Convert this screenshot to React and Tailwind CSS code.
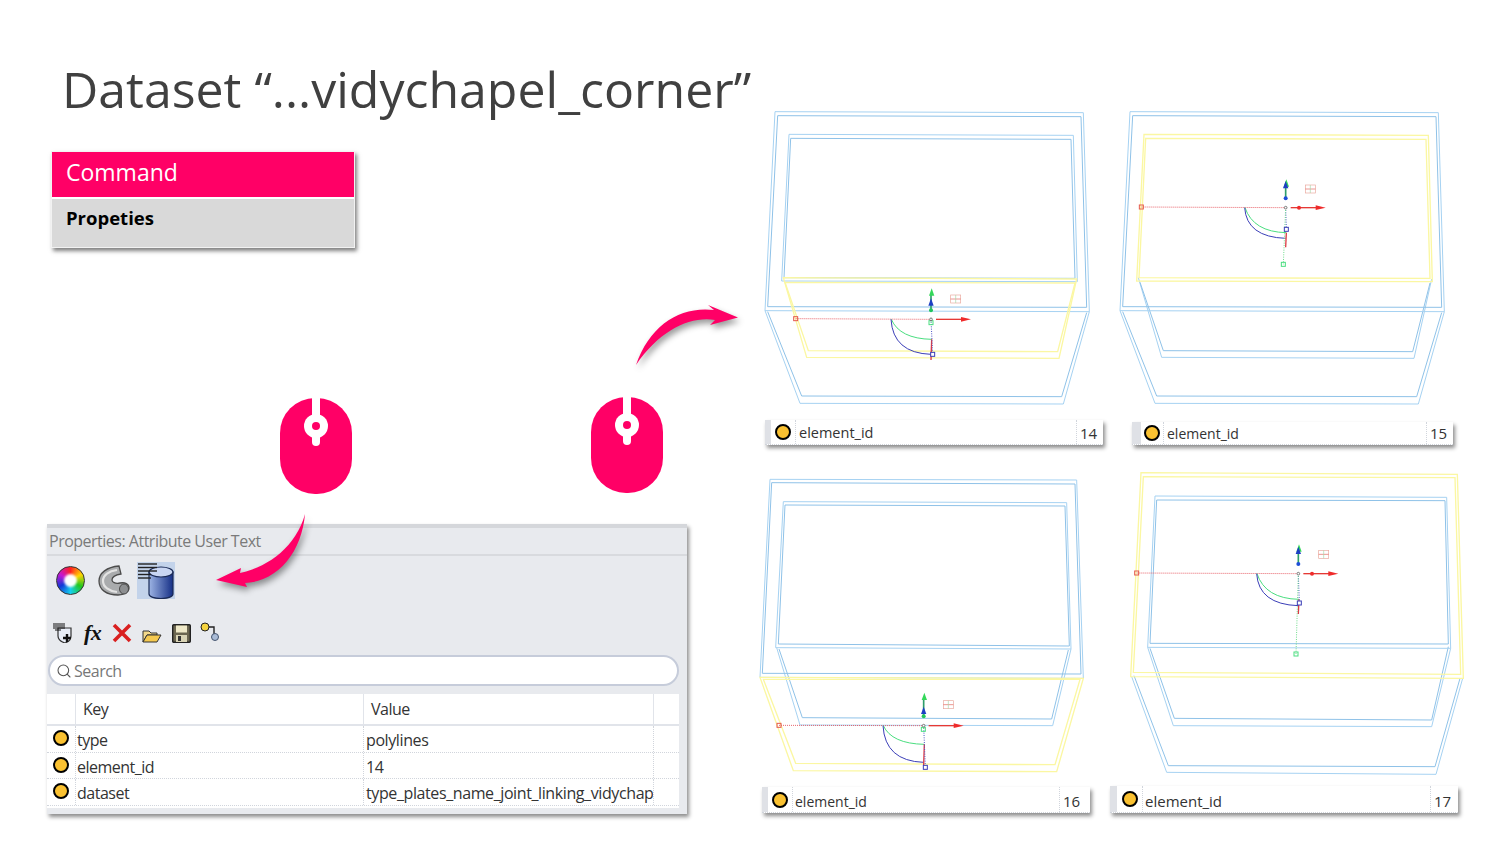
import { Search } from 'lucide-react'

const PINK = '#ff0066'
const BLUE = '#a6d2f2'
const YELLOW = '#fbf7a2'

const base = {
    A: [['60,35 985,38 1003,635 30,632'], ['68,47 978,50 995,622 38,620']],
    B: [['102,103 955,106 967,545 80,543'], ['107,115 948,118 960,535 87,533']],
    C: [['85,533 155,772 912,775 965,537'], ['90,547 160,752 908,755 960,549']],
    D: [['30,632 135,910 925,912 1003,635'], ['38,635 140,888 920,890 995,638']],
}

const cards = [
    {
        id: 14,
        yellow: 'C',
        quads: base,
        gizmo: { o: [528, 658], left: [122, 656], arc: 409, greenEnd: 718, blueEnd: 763, redEnd: 780, blueSq: [533, 763], greenSq: [528, 668], icon: [602, 597], blueTop: 595, greenTop: 565, dotY: 631, dotColor: '#22c55e', redDot: false },
        wrap: 'h-[320px]',
        svg: 'h-[320px]',
        viewBox: '0 0 1050 960',
        bar: 'ml-[10px] w-[338px] h-[25px]',
        strip: 'w-[6px]',
        circle: 'w-[25px]',
        key: 'w-[281px] pl-[3px] pt-[2px] text-[14.5px]',
        num: 'pl-[3px] pt-[2px]',
    },
    {
        id: 15,
        yellow: 'B',
        quads: base,
        gizmo: { o: [527, 323], left: [94, 321], arc: 405, greenEnd: 398, blueEnd: 415, redEnd: 442, blueSq: [529, 388], greenSq: [520, 493], icon: [601, 267], blueTop: 243, greenTop: 238, dotY: 295, dotColor: '#1d4ed8', redDot: 567 },
        wrap: 'h-[322px]',
        svg: 'h-[322px]',
        viewBox: '0 0 1050 966',
        bar: 'ml-[22px] w-[321px] h-[23px]',
        strip: 'w-[9px]',
        circle: 'w-[23px]',
        key: 'w-[263px] pl-[3px] pt-[1px] text-[14px]',
        num: 'pl-[3px] pt-[1px]',
    },
    {
        id: 16,
        yellow: 'D',
        quads: {
            A: [['45,28 965,30 985,625 15,622'], ['50,38 960,42 978,612 22,610']],
            B: [['85,95 935,98 948,537 62,533'], ['90,105 930,108 943,528 70,522']],
            C: [['65,533 135,765 893,767 948,537'], ['72,537 142,743 890,747 940,540']],
            D: [['15,622 115,902 905,905 985,625'], ['25,628 122,880 900,884 975,628']],
        },
        gizmo: { o: [506, 767], left: [72, 766], arc: 385, greenEnd: 823, blueEnd: 877, redEnd: 885, blueSq: [511, 892], greenSq: [505, 778], icon: [580, 704], blueTop: 710, greenTop: 668, dotY: 739, dotColor: '#22c55e', redDot: false },
        wrap: 'h-[317px] mt-[5px]',
        svg: 'h-[317px]',
        viewBox: '0 0 1050 951',
        bar: 'ml-[7px] w-[328px] h-[26px]',
        strip: 'w-[6px]',
        circle: 'w-[25px]',
        key: 'w-[267px] pl-[2px] pt-[4px] text-[14px]',
        num: 'pl-[3px] pt-[4px]',
    },
    {
        id: 17,
        yellow: 'A',
        quads: {
            A: [['93,23 1042,28 1060,640 62,635'], ['100,35 1035,38 1052,628 70,622']],
            B: [['135,93 1010,97 1022,550 113,547'], ['140,105 1005,107 1015,537 120,535']],
            C: [['113,547 190,782 965,785 1022,550'], ['120,550 193,760 965,765 1015,545']],
            D: [['65,635 170,922 978,928 1058,640'], ['72,632 175,902 975,905 1050,640']],
        },
        gizmo: { o: [565, 326], left: [80, 324], arc: 441, greenEnd: 403, blueEnd: 422, redEnd: 447, blueSq: [568, 414], greenSq: [558, 567], icon: [641, 268], blueTop: 245, greenTop: 238, dotY: 297, dotColor: '#1d4ed8', redDot: 606 },
        wrap: 'h-[321px]',
        svg: 'h-[321px]',
        viewBox: '0 0 1080 963',
        bar: 'w-[348px] h-[27px]',
        strip: 'w-[7px]',
        circle: 'w-[26px]',
        key: 'w-[288px] pl-[2px] pt-[4px] text-[15px]',
        num: 'pl-[3px] pt-[4px]',
    },
]

const rows = [
    ['type', 'polylines'],
    ['element_id', '14'],
    ['dataset', 'type_plates_name_joint_linking_vidychapel_corner'],
]

// yellow ball used in the attribute rows
const Dot = () => <span className="block w-[16px] h-[16px] rounded-full bg-[#fac131] border-2 border-black" />

const Gizmo = ({ g }) => {
    const [ox, oy] = g.o
    return (
        <g fill="none" strokeWidth="3">
            <polyline points={`${g.left[0]},${g.left[1]} ${ox},${oy}`} stroke="#e8636b" strokeDasharray="3 3" />
            <rect x={g.left[0] - 6} y={g.left[1] - 6} width="12" height="12" stroke="#e5594f" />
            <path d={`M${g.arc} ${oy} Q${g.arc + 25} ${g.greenEnd - 2} ${ox + 2} ${g.greenEnd}`} stroke="#4ade80" />
            <path d={`M${g.arc - 1} ${oy} Q${g.arc + 5} ${g.blueEnd - 4} ${ox} ${g.blueEnd}`} stroke="#3b3fb8" />
            <line x1={ox + 2} y1={g.greenEnd} x2={ox} y2={g.redEnd} stroke="#dc3b45" strokeWidth="4" />
            <line x1={ox} y1={oy} x2={g.blueSq[0]} y2={g.blueSq[1]} stroke="#4a55c8" strokeDasharray="3 4" />
            <line x1={ox} y1={oy} x2={g.greenSq[0]} y2={g.greenSq[1]} stroke="#6fdc8c" strokeDasharray="3 4" />
            <rect x={g.blueSq[0] - 6} y={g.blueSq[1] - 6} width="12" height="12" stroke="#3b3fb8" fill="white" />
            <rect x={g.greenSq[0] - 6} y={g.greenSq[1] - 6} width="12" height="12" stroke="#4ade80" />
            <circle cx={ox} cy={oy} r="4" stroke="#777" fill="white" />
            <line x1={ox + 15} y1={oy} x2={ox + 95} y2={oy} stroke="#e53935" strokeWidth="4" />
            <polygon points={`${ox + 90},${oy - 7} ${ox + 120},${oy} ${ox + 90},${oy + 7}`} fill="#ef2b2b" />
            {g.redDot && <circle cx={g.redDot} cy={oy} r="6" fill="#ef2b2b" />}
            <line x1={ox} y1={g.dotY} x2={ox} y2={g.greenTop + 20} stroke="#2f9e6a" strokeWidth="5" />
            <polygon points={`${ox + 2},${g.greenTop} ${ox + 10},${g.greenTop + 22} ${ox - 6},${g.greenTop + 22}`} fill="#34d85a" />
            <polygon points={`${ox},${g.blueTop} ${ox + 8},${g.blueTop + 22} ${ox - 8},${g.blueTop + 22}`} fill="#1d3fc4" />
            <circle cx={ox} cy={g.dotY} r="6" fill={g.dotColor} />
            <g stroke="#e9a79c" strokeWidth="2">
                <rect x={g.icon[0] - 15} y={g.icon[1] - 12} width="30" height="24" />
                <line x1={g.icon[0] - 15} y1={g.icon[1]} x2={g.icon[0] + 15} y2={g.icon[1]} stroke="#e2625a" />
                <line x1={g.icon[0]} y1={g.icon[1] - 12} x2={g.icon[0]} y2={g.icon[1] + 12} stroke="#a7d8a8" />
            </g>
        </g>
    )
}

const Wireframe = ({ card }) => {
    // top frames are closed, the lower trapezoids stay open at the top unless highlighted
    const order = ['D', 'C', 'A', 'B'].filter((k) => k !== card.yellow)
    return (
        <svg viewBox={card.viewBox} className={`${card.svg} w-auto block`} fill="none" strokeWidth="3">
            {order.map((k) => card.quads[k].map((q, i) => {
                const stroke = i === 0 ? BLUE : '#8fc2e8'
                return k === 'C' || k === 'D'
                    ? <polyline key={k + i} points={q[0]} stroke={stroke} />
                    : <polygon key={k + i} points={q[0]} stroke={stroke} />
            }))}
            {card.quads[card.yellow].map((q, i) => (
                <polygon key={i} points={q[0]} stroke={YELLOW} strokeWidth="4" />
            ))}
            <Gizmo g={card.gizmo} />
        </svg>
    )
}

const Card = ({ card }) => (
    <div>
        <div className={card.wrap}>
            <Wireframe card={card} />
        </div>
        <div className={`${card.bar} flex bg-white shadow-[2px_3px_4px_rgba(0,0,0,0.45)] border-b border-dotted border-gray-300 text-[#333]`}>
            <div className={`${card.strip} bg-[#dfe1e6]`} />
            <div className={`${card.circle} flex items-center justify-center border-r border-dotted border-gray-300`}>
                <Dot />
            </div>
            <div className={`${card.key} flex items-center border-r border-dotted border-gray-300`}>element_id</div>
            <div className={`${card.num} flex-1 text-[15px] flex items-center`}>{card.id}</div>
        </div>
    </div>
)

const Mouse = () => (
    <svg viewBox="0 0 72 96" className="w-[72px] h-[96px] block">
        <rect width="72" height="96" rx="35" fill={PINK} />
        <rect x="32" y="0" width="8" height="30" fill="white" />
        <rect x="32" y="30" width="8" height="18" rx="4" fill="white" />
        <circle cx="36" cy="28" r="12" fill="white" />
        <circle cx="36" cy="28" r="4" fill={PINK} />
    </svg>
)

const ColorWheel = () => (
    <div className="w-[29px] h-[29px] rounded-full bg-[conic-gradient(#ff1f1f,#ffd500,#1fc71f,#14d0ee,#1238d8,#c416d3,#ff1f1f)] border border-[#333] flex items-center justify-center">
        <div className="w-[13px] h-[13px] rounded-full bg-white blur-[1px]" />
    </div>
)

const PipeIcon = () => (
    <svg viewBox="0 0 32 31" className="w-[32px] h-[31px] block">
        <path d="M21 1 C9 2 1 8 1 16 C1 25 9 30 20 30 C26 30 31 27 31 23 C31 19 27 17 22 18 C17 19 14 17 14 15 C14 12 17 10 23 9 Z" fill="#a9abad" stroke="#4b4b4b" strokeWidth="1.3" />
        <path d="M19 5 C11 6 5 10 5 16 C5 22 11 26 19 27" fill="none" stroke="#e3e3e3" strokeWidth="2.2" />
        <ellipse cx="26" cy="24" rx="4.5" ry="5" fill="#8d8f91" stroke="#4b4b4b" />
    </svg>
)

const DbIcon = () => (
    <div className="w-[38px] h-[37px] bg-[#c3d3ea]">
        <svg viewBox="0 0 38 37" className="w-[38px] h-[37px] block">
            <defs>
                <linearGradient id="db" x1="0" x2="1" y1="0" y2="0">
                    <stop offset="0" stopColor="#9db4e4" />
                    <stop offset="1" stopColor="#152f86" />
                </linearGradient>
            </defs>
            <path d="M12 10 V32 C12 38 36 38 36 32 V10 Z" fill="url(#db)" stroke="#1a2a55" strokeWidth="1.2" />
            <ellipse cx="24" cy="10" rx="12" ry="5" fill="#c9d6f2" stroke="#1a2a55" strokeWidth="1.2" />
            <g stroke="#222" strokeWidth="1.4">
                <line x1="1" y1="2" x2="20" y2="2" />
                <line x1="1" y1="5.5" x2="20" y2="5.5" />
                <line x1="1" y1="9" x2="20" y2="9" />
                <line x1="1" y1="12.5" x2="14" y2="12.5" />
                <line x1="1" y1="16" x2="14" y2="16" />
            </g>
        </svg>
    </div>
)

const NewIcon = () => (
    <svg viewBox="0 0 20 20" className="w-[20px] h-[20px] block">
        <path d="M5 5 H18 V13 C18 17 15 19 12 20 C9 19 5 17 5 13 Z" fill="#e8edf7" stroke="#333" strokeWidth="1.2" />
        <g stroke="#111" strokeWidth="1">
            <line x1="0" y1="1" x2="12" y2="1" />
            <line x1="0" y1="3" x2="12" y2="3" />
            <line x1="0" y1="5" x2="12" y2="5" />
            <line x1="2" y1="7" x2="8" y2="7" />
        </g>
        <path d="M10 15 H18 M14 11 V19" stroke="#111" strokeWidth="2.4" />
    </svg>
)

const FolderIcon = () => (
    <svg viewBox="0 0 20 15" className="w-[20px] h-[15px] block">
        <path d="M1 14 V3 H7 L9 5 H15 V7 H5 L1 14 Z" fill="#f3d98b" stroke="#333" strokeWidth="1" />
        <path d="M1 14 L5 7 H19 L15 14 Z" fill="#f5c94f" stroke="#333" strokeWidth="1" />
    </svg>
)

const SaveIcon = () => (
    <svg viewBox="0 0 19 19" className="w-[19px] h-[19px] block">
        <rect x="0.7" y="0.7" width="17.6" height="17.6" rx="1" fill="#6b6650" stroke="#222" strokeWidth="1.4" />
        <rect x="4" y="1.5" width="11" height="7" fill="#efe9c8" />
        <rect x="4" y="11" width="11" height="7" fill="#d9d4b5" />
        <rect x="6" y="12" width="3" height="5" fill="#333" />
    </svg>
)

const NodeIcon = () => (
    <svg viewBox="0 0 19 19" className="w-[19px] h-[19px] block">
        <path d="M5 5 H14 V14" fill="none" stroke="#222" strokeWidth="1.4" />
        <circle cx="5" cy="5" r="4" fill="#f5d33d" stroke="#222" />
        <circle cx="15" cy="15" r="3.5" fill="#a9bbd6" stroke="#44546e" />
    </svg>
)

const App = () => (
    <div className="relative w-[1500px] h-[844px] overflow-hidden bg-white flex font-['Open_Sans',sans-serif]">
        <div className="w-[755px] shrink-0">
            <h1 className="mt-[56px] ml-[62px] text-[50px] leading-[67px] whitespace-nowrap text-[#404040]">Dataset “...vidychapel_corner”</h1>

            <div className="mt-[28px] ml-[51px] w-[304px] border border-[#f2f2f2] shadow-[2px_3px_4px_rgba(0,0,0,0.5)]">
                <div className="h-[45px] bg-[#ff0066] text-white text-[23px] leading-[40px] pl-[14px]">Command</div>
                <div className="h-[48px] mt-[2px] bg-[#d9d9d9] text-black font-bold text-[18.5px] leading-[38px] pl-[14px]">Propeties</div>
            </div>

            <div className="mt-[150px] ml-[280px] flex gap-[239px]">
                <Mouse />
                <div className="-mt-[1px]"><Mouse /></div>
            </div>

            <div className="mt-[30px] ml-[47px] w-[640px] h-[290px] bg-[#e8eaee] border-t-4 border-[#d5d7db] shadow-[2px_3px_4px_rgba(0,0,0,0.45)] tracking-[-0.5px]">
                <div className="h-[28px] pl-[2px] border-b-2 border-[#d8dade] text-[16px] leading-[26px] text-[#7a7a7a]">Properties: Attribute User Text</div>
                <div className="h-[38px] mt-[5px] pl-[9px] flex items-center">
                    <ColorWheel />
                    <div className="ml-[13px]"><PipeIcon /></div>
                    <div className="ml-[7px]"><DbIcon /></div>
                </div>
                <div className="h-[22px] mt-[23px] pl-[6px] flex items-center">
                    <NewIcon />
                    <span className="ml-[11px] w-[19px] font-['Liberation_Serif',serif] italic font-bold text-[22px] leading-[22px] text-[#111]">fx</span>
                    <svg viewBox="0 0 20 20" className="ml-[9px] w-[20px] h-[20px] block">
                        <path d="M2 2 L18 18 M18 2 L2 18" stroke="#d92020" strokeWidth="3.6" />
                    </svg>
                    <div className="ml-[10px] mt-[4px]"><FolderIcon /></div>
                    <div className="ml-[10px]"><SaveIcon /></div>
                    <div className="ml-[9px] -mt-[3px]"><NodeIcon /></div>
                </div>
                <div className="mt-[11px] ml-[1px] w-[631px] h-[31px] rounded-full border-2 border-[#c6ccda] bg-white flex items-center pl-[6px] text-[16px] text-[#777]">
                    <Search size={16} color="#555" strokeWidth={1.6} />
                    <span className="ml-[2px]">Search</span>
                </div>
                <div className="mt-[8px] w-[632px] h-[114px] bg-white text-[16px] text-[#333]">
                    <div className="h-[32px] flex border-b-2 border-[#e1e4ea]">
                        <div className="w-[29px] border-r border-[#e1e4ea]" />
                        <div className="w-[288px] pl-[7px] leading-[30px] border-r border-[#e1e4ea]">Key</div>
                        <div className="w-[290px] pl-[7px] leading-[30px] border-r border-[#e1e4ea]">Value</div>
                    </div>
                    {rows.map((row) => (
                        <div key={row[0]} className="h-[26.5px] flex border-b border-dotted border-gray-300">
                            <div className="w-[29px] pl-[6px] pt-[4px] border-r border-dotted border-gray-300"><Dot /></div>
                            <div className="w-[288px] pl-[1px] leading-[28px] border-r border-dotted border-gray-300">{row[0]}</div>
                            <div className="w-[290px] pl-[2px] leading-[28px] tracking-[-0.4px] border-r border-dotted border-gray-300 overflow-hidden whitespace-nowrap">{row[1]}</div>
                        </div>
                    ))}
                </div>
            </div>
        </div>

        <div className="pt-[100px] grid grid-cols-[355px_390px] grid-rows-[365px_auto]">
            {cards.map((card) => <Card key={card.id} card={card} />)}
        </div>

        {/* pink arrows sit over the panel and the slide */}
        <svg viewBox="0 0 1500 844" className="absolute inset-0 w-[1500px] h-[844px] pointer-events-none drop-shadow-[2px_4px_3px_rgba(0,0,0,0.4)]">
            <path d="M636 365 C650 325 680 306 714 310 L708 305 L738 317.5 L710 325 L715 320 C690 316 660 330 636 365 Z" fill={PINK} />
            <path d="M305 514 C302 550 280 581 245 583 L247 587 L216 580 L241 568 L240 573 C268 567 296 547 305 514 Z" fill={PINK} />
        </svg>
    </div>
)

export default App
